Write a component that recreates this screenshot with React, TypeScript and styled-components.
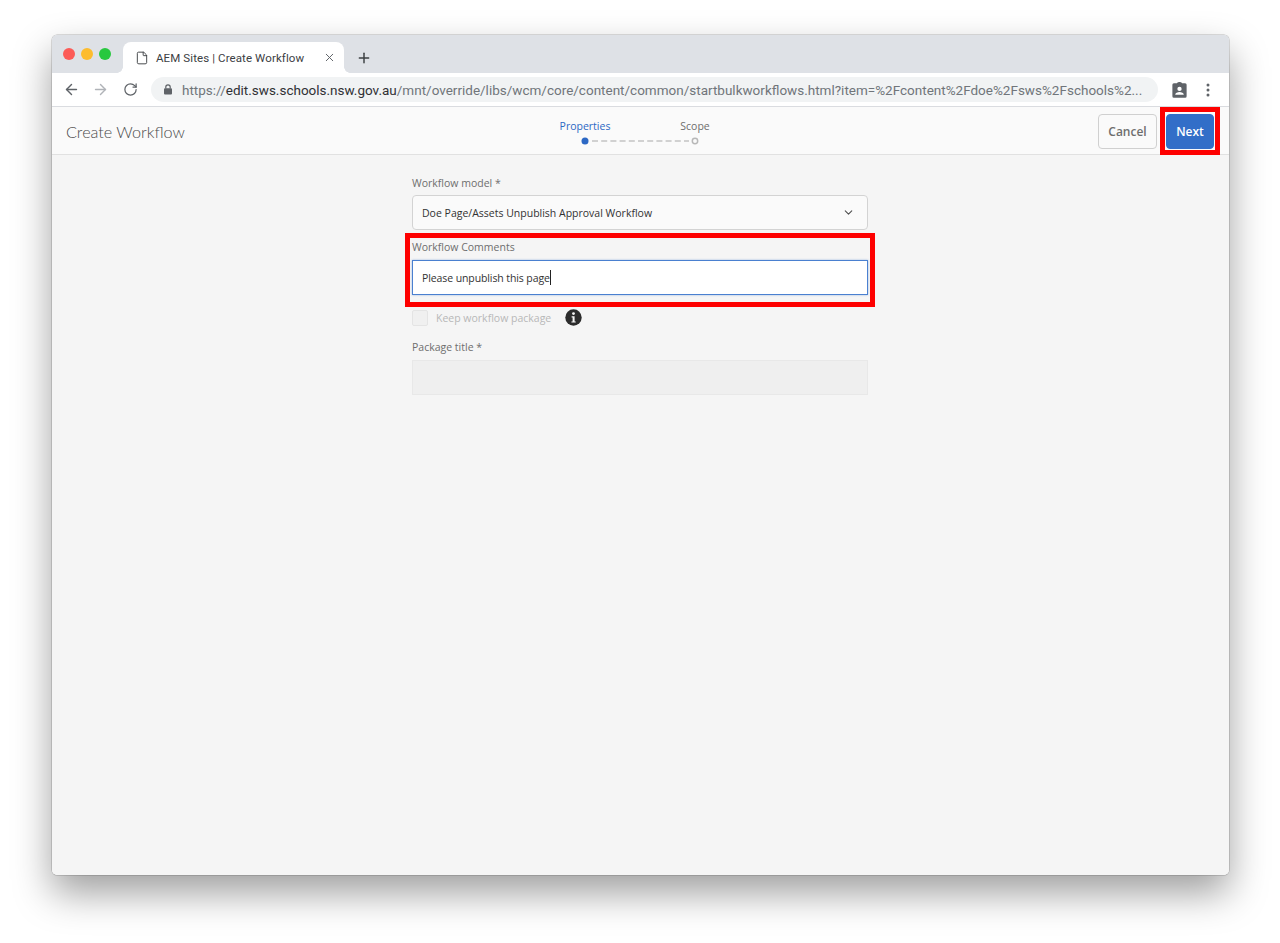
import React from "react";
import styled, { createGlobalStyle } from "styled-components";
import { ArrowLeft, ArrowRight, ChevronDown, File, Plus, RotateCw, X } from "lucide-react";

const GlobalStyle = createGlobalStyle`
  html, body {
    margin: 0;
    padding: 0;
    background: #fff;
  }
  body {
    font-family: "Open Sans", "Noto Sans", sans-serif;
    overflow: hidden;
  }
`;

const Desktop = styled.div`
  width: 1280px;
  height: 943px;
  padding: 35px 0 0 52px;
  box-sizing: border-box;
`;

const BrowserWindow = styled.div`
  width: 1177px;
  height: 840px;
  display: flex;
  flex-direction: column;
  border-radius: 5px;
  overflow: hidden;
  background: #f5f5f5;
  box-shadow: 0 0 0 0.5px rgba(0, 0, 0, 0.25), 0 18px 38px rgba(0, 0, 0, 0.38);
`;

const TabStrip = styled.div`
  height: 38px;
  flex: none;
  display: flex;
  align-items: flex-end;
  background: #dee1e6;
`;

const TrafficLights = styled.div`
  width: 71px;
  height: 100%;
  box-sizing: border-box;
  padding: 13px 0 0 11px;
  display: flex;
  gap: 6px;
`;

const Light = styled.span<{ $color: string }>`
  width: 12px;
  height: 12px;
  border-radius: 50%;
  background: ${(p) => p.$color};
`;

const Tab = styled.div`
  position: relative;
  width: 221px;
  height: 31px;
  box-sizing: border-box;
  padding: 0 8px 0 12px;
  display: flex;
  align-items: center;
  background: #fff;
  border-radius: 8px 8px 0 0;
  color: #3c4043;

  /* the small flare where the tab meets the toolbar */
  &::before,
  &::after {
    content: "";
    position: absolute;
    bottom: 0;
    width: 6px;
    height: 6px;
  }
  &::before {
    left: -6px;
    background: radial-gradient(circle at 0 0, transparent 5.5px, #fff 6px);
  }
  &::after {
    right: -6px;
    background: radial-gradient(circle at 100% 0, transparent 5.5px, #fff 6px);
  }
`;

const TabTitle = styled.span`
  flex: 1;
  margin-left: 7px;
  font-family: Roboto, "Liberation Sans", sans-serif;
  font-size: 11.5px;
  letter-spacing: 0.1px;
  white-space: nowrap;
`;

const NewTab = styled.div`
  width: 40px;
  height: 31px;
  display: flex;
  align-items: center;
  justify-content: center;
  color: #3c4043;
`;

const Toolbar = styled.div`
  height: 34px;
  flex: none;
  display: flex;
  align-items: center;
  box-sizing: border-box;
  padding: 0 19px 0 10px;
  background: #fff;
  border-bottom: 1px solid #dadce0;
  color: #5f6368;
`;

const NavButton = styled.div<{ $muted?: boolean }>`
  width: 18px;
  height: 18px;
  margin-right: 11.5px;
  display: flex;
  align-items: center;
  justify-content: center;
  color: ${(p) => (p.$muted ? "#b0b3b8" : "#5f6368")};
`;

const Omnibox = styled.div`
  width: 1007px;
  height: 25px;
  flex: none;
  margin-left: 0.5px;
  box-sizing: border-box;
  padding: 0 10px 0 13px;
  display: flex;
  align-items: center;
  gap: 10px;
  border-radius: 13px;
  background: #f1f3f4;
  overflow: hidden;
`;

const Url = styled.span`
  font-family: Roboto, "Liberation Sans", sans-serif;
  font-size: 13.5px;
  color: #70757a;
  white-space: nowrap;
`;

const UrlHost = styled.span`
  color: #303134;
`;

const ToolbarEnd = styled.div`
  margin-left: auto;
  display: flex;
  align-items: center;
  gap: 19px;
`;

const AppHeader = styled.header`
  height: 48px;
  flex: none;
  display: grid;
  grid-template-columns: 1fr auto 1fr;
  align-items: center;
  box-sizing: border-box;
  padding: 2px 15px 0;
  background: #fafafa;
  border-bottom: 1px solid #e1e1e1;
`;

const AppTitle = styled.h1`
  margin: 0 0 0 -1px;
  font-family: Lato, "Open Sans", sans-serif;
  font-size: 16.2px;
  font-weight: 300;
  color: #4b4b4b;
`;

const Stepper = styled.div`
  display: flex;
  flex-direction: column;
  align-items: center;
  gap: 2px;
  margin: 2px 1px 0 0;
`;

const StepLabels = styled.div`
  display: flex;
  justify-content: center;
`;

const StepLabel = styled.span<{ $active?: boolean }>`
  width: 110px;
  text-align: center;
  font-size: 10.5px;
  line-height: 15px;
  color: ${(p) => (p.$active ? "#2d68c4" : "#6e6e6e")};
`;

const Actions = styled.div`
  position: relative;
  justify-self: end;
  display: flex;
  gap: 9px;
`;

const Button = styled.button<{ $primary?: boolean }>`
  height: 35px;
  width: ${(p) => (p.$primary ? "48px" : "59px")};
  padding: 0;
  border-radius: 4px;
  box-sizing: border-box;
  border: 1px solid ${(p) => (p.$primary ? "#326ec8" : "#d0d0d0")};
  background: ${(p) => (p.$primary ? "#326ec8" : "#fafafa")};
  color: ${(p) => (p.$primary ? "#fff" : "#6e6e6e")};
  font-family: "Open Sans", sans-serif;
  font-size: 12px;
  font-weight: 600;
`;

const NextHighlight = styled.div`
  position: absolute;
  top: -7px;
  right: -6px;
  width: 60px;
  height: 48px;
  box-sizing: border-box;
  border: 5px solid #fe0000;
`;

const Content = styled.main`
  flex: 1;
  display: flex;
  flex-direction: column;
  align-items: center;
  padding-top: 19px;
  background: #f5f5f5;
`;

const Form = styled.form`
  width: 456px;
  margin-right: 1px;
  display: flex;
  flex-direction: column;
`;

const Field = styled.div`
  position: relative;
  display: flex;
  flex-direction: column;
`;

const Label = styled.label`
  height: 21px;
  font-size: 10.5px;
  line-height: 18px;
  color: #6e6e6e;
`;

const SpacedLabel = styled(Label)`
  height: 22px;
`;

const Select = styled.div`
  height: 35px;
  box-sizing: border-box;
  padding: 0 12px 0 9px;
  display: flex;
  align-items: center;
  justify-content: space-between;
  border: 1px solid #d3d3d3;
  border-radius: 4px;
  background: #fafafa;
  color: #323232;
  font-size: 10.5px;
`;

const TextBox = styled.div<{ $disabled?: boolean; $focused?: boolean }>`
  height: 35px;
  box-sizing: border-box;
  padding: 0 9px;
  display: flex;
  align-items: center;
  border: 1px solid ${(p) => (p.$focused ? "#4a80d0" : p.$disabled ? "#e8e8e8" : "#d3d3d3")};
  background: ${(p) => (p.$disabled ? "#efefef" : "#fff")};
  box-shadow: ${(p) => (p.$focused ? "0 0 2px rgba(50, 110, 200, 0.45)" : "none")};
  color: #323232;
  font-size: 10.5px;
  letter-spacing: -0.1px;
`;

const Caret = styled.span`
  width: 1px;
  height: 15px;
  margin-left: 0.5px;
  background: #222;
`;

const CommentsHighlight = styled.div`
  position: absolute;
  top: -5px;
  left: -7px;
  right: -7px;
  bottom: -12px;
  border: 5px solid #fe0000;
`;

const CommentsField = styled(Field)`
  margin-top: 8px;
`;

const CheckRow = styled.div`
  display: flex;
  align-items: center;
  height: 17px;
  margin-top: 14px;
`;

const Checkbox = styled.span`
  width: 16px;
  height: 16px;
  box-sizing: border-box;
  border: 1px solid #e4e4e4;
  border-radius: 2px;
  background: #f0f0f0;
`;

const CheckLabel = styled.span`
  margin-left: 8px;
  margin-right: 14px;
  font-size: 10.5px;
  color: #b8b8b8;
`;

const PackageField = styled(Field)`
  margin-top: 12px;
`;

const Bullet = () => (
  <svg width="17" height="17" viewBox="0 0 17 17">
    <circle cx="8.5" cy="8.5" r="8.2" fill="#2c2c2c" />
    <circle cx="8.5" cy="4.6" r="1.4" fill="#f5f5f5" />
    <path d="M6.6 7.2h3v5.2h1.1v1.2H6.4v-1.2h1.2V8.4h-1z" fill="#f5f5f5" />
  </svg>
);

const ClipboardBadge = () => (
  <svg width="15" height="17" viewBox="0 0 16 18">
    <path
      d="M2 2.2h3.2a3 2 0 0 1 5.6 0H14a1.6 1.6 0 0 1 1.6 1.6v12.4a1.6 1.6 0 0 1-1.6 1.6H2a1.6 1.6 0 0 1-1.6-1.6V3.8A1.6 1.6 0 0 1 2 2.2z"
      fill="#5f6368"
    />
    <circle cx="8" cy="8.4" r="2.3" fill="#fff" />
    <path d="M3.4 14.6c0-2 2.6-2.9 4.6-2.9s4.6.9 4.6 2.9z" fill="#fff" />
  </svg>
);

const MenuDots = () => (
  <svg width="4" height="14" viewBox="0 0 4 14">
    <circle cx="2" cy="2" r="1.5" fill="#5f6368" />
    <circle cx="2" cy="7" r="1.5" fill="#5f6368" />
    <circle cx="2" cy="12" r="1.5" fill="#5f6368" />
  </svg>
);

const PadLock = () => (
  <svg width="8" height="11" viewBox="0 0 8 11" style={{ flex: "none" }}>
    <path d="M1.8 4.4V3a2.2 2.2 0 0 1 4.4 0v1.4" fill="none" stroke="#5f6368" strokeWidth="1.2" />
    <rect x="0" y="4.2" width="8" height="6.4" rx="1" fill="#5f6368" />
  </svg>
);

const StepTrack = () => (
  <svg width="122" height="10" viewBox="0 0 122 10">
    <circle cx="6" cy="5" r="3.5" fill="#2d68c4" />
    <line x1="13" y1="5" x2="110" y2="5" stroke="#c4c4c4" strokeWidth="1.6" strokeDasharray="6 3.2" />
    <circle cx="116" cy="5" r="2.7" fill="none" stroke="#b8b8b8" strokeWidth="1.5" />
  </svg>
);

const App: React.FC = () => {
  return (
    <Desktop>
      <GlobalStyle />
      <BrowserWindow>
        <TabStrip>
          <TrafficLights>
            <Light $color="#fc5b57" />
            <Light $color="#fdbc2e" />
            <Light $color="#28c83f" />
          </TrafficLights>
          <Tab>
            <File size={14} strokeWidth={1.6} />
            <TabTitle>AEM Sites | Create Workflow</TabTitle>
            <X size={13} strokeWidth={1.8} color="#5f6368" />
          </Tab>
          <NewTab>
            <Plus size={16} strokeWidth={2.2} />
          </NewTab>
        </TabStrip>
        <Toolbar>
          <NavButton>
            <ArrowLeft size={17} strokeWidth={2} />
          </NavButton>
          <NavButton $muted>
            <ArrowRight size={17} strokeWidth={2} />
          </NavButton>
          <NavButton>
            <RotateCw size={15} strokeWidth={2} />
          </NavButton>
          <Omnibox>
            <PadLock />
            <Url>
              https://<UrlHost>edit.sws.schools.nsw.gov.au</UrlHost>
              /mnt/override/libs/wcm/core/content/common/startbulkworkflows.html?item=%2Fcontent%2Fdoe%2Fsws%2Fschools%2...
            </Url>
          </Omnibox>
          <ToolbarEnd>
            <ClipboardBadge />
            <MenuDots />
          </ToolbarEnd>
        </Toolbar>
        <AppHeader>
          <AppTitle>Create Workflow</AppTitle>
          <Stepper>
            <StepLabels>
              <StepLabel $active>Properties</StepLabel>
              <StepLabel>Scope</StepLabel>
            </StepLabels>
            <StepTrack />
          </Stepper>
          <Actions>
            <Button type="button">Cancel</Button>
            <Button type="button" $primary>
              Next
            </Button>
            <NextHighlight />
          </Actions>
        </AppHeader>
        <Content>
          <Form>
            <Field>
              <Label>Workflow model *</Label>
              <Select>
                Doe Page/Assets Unpublish Approval Workflow
                <ChevronDown size={13} strokeWidth={2} color="#505050" />
              </Select>
            </Field>
            <CommentsField>
              <SpacedLabel>Workflow Comments</SpacedLabel>
              <TextBox $focused>
                Please unpublish this page
                <Caret />
              </TextBox>
              <CommentsHighlight />
            </CommentsField>
            <CheckRow>
              <Checkbox />
              <CheckLabel>Keep workflow package</CheckLabel>
              <Bullet />
            </CheckRow>
            <PackageField>
              <SpacedLabel>Package title *</SpacedLabel>
              <TextBox $disabled />
            </PackageField>
          </Form>
        </Content>
      </BrowserWindow>
    </Desktop>
  );
};

export default App;
